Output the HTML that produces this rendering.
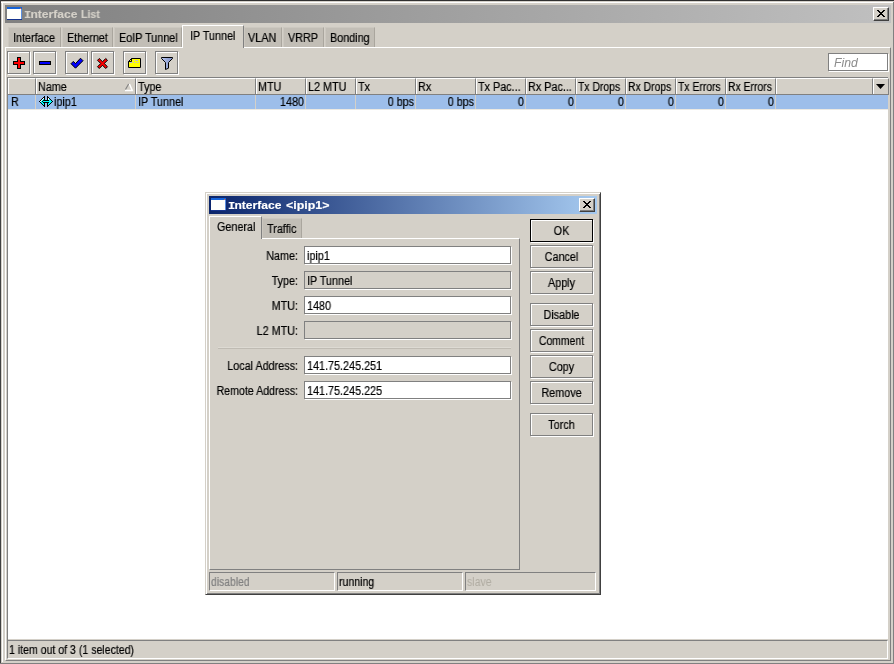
<!DOCTYPE html>
<html>
<head>
<meta charset="utf-8">
<title>Interface List</title>
<style>
html,body{margin:0;padding:0;}
body{width:894px;height:664px;position:relative;overflow:hidden;background:#d4d0c8;
  font-family:"Liberation Sans",sans-serif;font-size:11px;color:#000;}
div,span{position:absolute;box-sizing:border-box;}
.t{will-change:transform;-webkit-text-stroke:.2px currentColor;white-space:nowrap;font-size:12px;line-height:14px;height:14px;transform:scaleX(.9);transform-origin:0 0;}
.tb{will-change:transform;-webkit-text-stroke:.15px currentColor;white-space:nowrap;font-size:11px;line-height:13px;height:13px;font-weight:bold;transform:scaleX(1.095);transform-origin:0 0;}
.r{text-align:right;transform-origin:100% 0;}
.c{text-align:center;transform-origin:50% 0;}
/* etched button: 1px dark box, white inner top/left, white outer bottom/right */
.eb{border:1px solid #808080;box-shadow:inset 1px 1px 0 #fff,1px 1px 0 #fff;background:#d4d0c8;}
.fld{border:1px solid #808080;box-shadow:1px 1px 0 #fff;background:#fff;}
.fld.ro{background:#d4d0c8;}
.sunk{border:1px solid #808080;border-right-color:#fff;border-bottom-color:#fff;}
.itab{background:#c2beb6;border-left:1px solid #ccc8c0;border-top:1px solid #ccc8c0;border-right:1px solid #aaa69e;}
.hc{top:78px;height:16px;border-left:1px solid #fff;border-top:1px solid #fff;border-right:1px solid #808080;background:#d4d0c8;}
</style>
</head>
<body>

<!-- ===== main window frame ===== -->
<div style="left:0;top:0;width:894px;height:1px;background:#303030"></div>
<div style="left:0;top:0;width:1px;height:664px;background:#404040"></div>
<div style="left:1px;top:2px;width:892px;height:1px;background:#fff"></div>
<div style="left:2px;top:2px;width:1px;height:660px;background:#fff"></div>
<div style="left:893px;top:2px;width:1px;height:662px;background:#808080"></div>
<div style="left:0;top:663px;width:894px;height:1px;background:#808080"></div>

<!-- main title bar (inactive) -->
<div style="left:5px;top:5px;width:886px;height:18px;background:linear-gradient(to right,#808080 0%,#c0c0c0 100%)"></div>
<svg style="position:absolute;left:7px;top:7px" width="15" height="13" viewBox="0 0 15 13">
  <rect x="0" y="0" width="15" height="13" fill="#fffffb"/>
  <rect x="0" y="0" width="15" height="2" fill="#1663d8"/>
  <rect x="0" y="12" width="15" height="1" fill="#16348c"/>
  <rect x="14" y="2" width="1" height="10" fill="#5b8fe0"/>
  <rect x="13" y="1" width="1" height="1" fill="#e8602c"/>
</svg>
<span class="tb" style="left:25px;top:8px;color:#d4d0c8"><span style="position:static;font-family:'Liberation Mono',monospace;display:inline-block;width:5px;margin-left:-1px;margin-right:1px;text-align:left;transform:none">I</span>nterface</span><span class="tb" style="left:80.6px;top:8px;color:#d4d0c8;transform:scaleX(.96)">List</span>
<!-- close button -->
<div style="left:873px;top:7px;width:16px;height:14px;background:#d4d0c8;border:1px solid #fff;border-right-color:#404040;border-bottom-color:#404040;box-shadow:inset -1px -1px 0 #808080"></div>
<svg style="position:absolute;left:877px;top:10px" width="8" height="7" viewBox="0 0 8 7">
  <path d="M0 0h2v1h1v1h2v-1h1v-1h2v1h-1v1h-1v1h-1v1h1v1h1v1h1v1h-2v-1h-1v-1h-2v1h-1v1h-2v-1h1v-1h1v-1h1v-1h-1v-1h-1v-1h-1z" fill="#000"/>
</svg>

<!-- main tabs -->
<div class="itab" style="left:8px;top:27px;width:53px;height:20px"></div>
<div class="itab" style="left:62px;top:27px;width:51px;height:20px"></div>
<div class="itab" style="left:114px;top:27px;width:68px;height:20px"></div>
<div class="itab" style="left:244px;top:27px;width:38px;height:20px"></div>
<div class="itab" style="left:283px;top:27px;width:41px;height:20px"></div>
<div class="itab" style="left:325px;top:27px;width:50px;height:20px"></div>
<span class="t" style="left:13px;top:31px">Interface</span>
<span class="t" style="left:67px;top:31px">Ethernet</span>
<span class="t" style="left:119px;top:31px">EoIP Tunnel</span>
<span class="t" style="left:248px;top:31px">VLAN</span>
<span class="t" style="left:288px;top:31px">VRRP</span>
<span class="t" style="left:330px;top:31px">Bonding</span>

<!-- tab panel -->
<div style="left:5px;top:47px;width:886px;height:614px;border:1px solid #fff;border-right-color:#808080;border-bottom-color:#808080"></div>
<!-- active tab -->
<div style="left:182px;top:25px;width:62px;height:23px;background:#d4d0c8;border-left:1px solid #fff;border-top:1px solid #fff;border-right:1px solid #808080"></div>
<span class="t" style="left:190px;top:29px">IP Tunnel</span>

<!-- toolbar buttons -->
<div class="eb" style="left:7px;top:51px;width:23px;height:23px"></div>
<div class="eb" style="left:33px;top:51px;width:23px;height:23px"></div>
<div class="eb" style="left:65px;top:51px;width:23px;height:23px"></div>
<div class="eb" style="left:91px;top:51px;width:23px;height:23px"></div>
<div class="eb" style="left:123px;top:51px;width:23px;height:23px"></div>
<div class="eb" style="left:155px;top:51px;width:23px;height:23px"></div>
<svg style="position:absolute;left:0;top:51px" width="180" height="24" viewBox="0 51 180 24">
  <!-- plus -->
  <path d="M17 57h4v4h4v4h-4v4h-4v-4h-4v-4h4z" fill="#000" shape-rendering="crispEdges"/>
  <path d="M18 58h2v4h4v2h-4v4h-2v-4h-4v-2h4z" fill="#f00" shape-rendering="crispEdges"/>
  <!-- minus -->
  <rect x="39" y="61" width="12" height="4" fill="#000" shape-rendering="crispEdges"/>
  <rect x="40" y="62" width="10" height="2" fill="#00f" shape-rendering="crispEdges"/>
  <!-- check -->
  <path d="M80.5 58.2L83 60.7L75.5 68.2L71 63.7L73.3 61.4L75.5 63.6Z" fill="#00f" stroke="#000" stroke-width="1" stroke-linejoin="miter"/>
  <!-- x -->
  <path d="M99.27 58.50L102.50 61.73L105.73 58.50L107.50 60.27L104.27 63.50L107.50 66.73L105.73 68.50L102.50 65.27L99.27 68.50L97.50 66.73L100.73 63.50L97.50 60.27Z" fill="#f00" stroke="#000" stroke-width="1"/>
  <!-- comment note -->
  <path d="M131.5 58.5H140.5V67.5H128.5V61.5Z" fill="#ff0" stroke="#000" stroke-width="1"/>
  <path d="M131.5 58.5V61.5H128.5" fill="none" stroke="#000" stroke-width="1"/>
  <path d="M134 60.5h1M136 60.5h2M130 62.5h2.5M134 62.5h1.5M137 62.5h1.5" stroke="#b4b4e6" stroke-width="1"/>
  <!-- funnel -->
  <defs><linearGradient id="fg" x1="0" y1="0" x2="1" y2="0"><stop offset="0" stop-color="#b8c6ee"/><stop offset="1" stop-color="#7f90c8"/></linearGradient></defs>
  <path d="M161.5 57.5H172.5V58.5L168.5 62.5V68.2L165.5 69.5V62.5L161.5 58.5Z" fill="url(#fg)" stroke="#000" stroke-width="1"/>
</svg>

<!-- find box -->
<div style="left:828px;top:53px;width:60px;height:18px;background:#fff;border:1px solid #808080;box-shadow:1px 1px 0 #fff"></div>
<span class="t" style="left:834px;top:56px;font-style:italic;color:#8c8c8c;-webkit-text-stroke:0;transform:scaleX(1.02)">Find</span>

<!-- table -->
<div style="left:7px;top:77px;width:881px;height:562px;background:#fff;border-left:1px solid #808080;border-top:1px solid #808080"></div>
<div style="left:8px;top:78px;width:881px;height:17px;background:#d4d0c8;border-bottom:1px solid #808080"></div>
<div class="hc" style="left:8px;width:28px"></div>
<div class="hc" style="left:36px;width:100px"></div>
<div class="hc" style="left:136px;width:120px"></div>
<div class="hc" style="left:256px;width:50px"></div>
<div class="hc" style="left:306px;width:50px"></div>
<div class="hc" style="left:356px;width:60px"></div>
<div class="hc" style="left:416px;width:60px"></div>
<div class="hc" style="left:476px;width:50px"></div>
<div class="hc" style="left:526px;width:50px"></div>
<div class="hc" style="left:576px;width:50px"></div>
<div class="hc" style="left:626px;width:50px"></div>
<div class="hc" style="left:676px;width:50px"></div>
<div class="hc" style="left:726px;width:50px"></div>
<div class="hc" style="left:776px;width:97px"></div>
<div class="hc" style="left:873px;width:16px"></div>
<span class="t" style="left:38.3px;top:80px">Name</span>
<span class="t" style="left:138.3px;top:80px">Type</span>
<span class="t" style="left:258.3px;top:80px">MTU</span>
<span class="t" style="left:308.3px;top:80px">L2 MTU</span>
<span class="t" style="left:358.3px;top:80px">Tx</span>
<span class="t" style="left:418.3px;top:80px">Rx</span>
<span class="t" style="left:478.3px;top:80px">Tx Pac...</span>
<span class="t" style="left:528.3px;top:80px">Rx Pac...</span>
<span class="t" style="left:578.3px;top:80px;transform:scaleX(.865)">Tx Drops</span>
<span class="t" style="left:628.3px;top:80px;transform:scaleX(.865)">Rx Drops</span>
<span class="t" style="left:678.3px;top:80px;transform:scaleX(.865)">Tx Errors</span>
<span class="t" style="left:728.3px;top:80px;transform:scaleX(.865)">Rx Errors</span>
<svg style="position:absolute;left:876px;top:84px" width="9" height="5" viewBox="0 0 9 5"><path d="M0 0h9l-4.5 5z" fill="#000"/></svg>
<!-- sort arrow -->
<svg style="position:absolute;left:124px;top:83px" width="10" height="9" viewBox="124 83 10 9">
  <path d="M129.4 84L132.3 90.4H125" stroke="#fff" stroke-width="1.5" fill="none" stroke-linejoin="miter"/>
  <path d="M128.6 84L125.5 89.6" stroke="#808080" stroke-width="1.1" fill="none"/>
</svg>

<!-- selected row -->
<div style="left:8px;top:95px;width:880px;height:14px;background:#9dbeea"></div><div style="left:8px;top:109px;width:880px;height:1px;background:#ece9e2"></div>
<div style="left:35px;top:95px;width:1px;height:14px;background:#d4d0c8"></div><div style="left:135px;top:95px;width:1px;height:14px;background:#d4d0c8"></div><div style="left:255px;top:95px;width:1px;height:14px;background:#d4d0c8"></div><div style="left:305px;top:95px;width:1px;height:14px;background:#d4d0c8"></div><div style="left:355px;top:95px;width:1px;height:14px;background:#d4d0c8"></div><div style="left:415px;top:95px;width:1px;height:14px;background:#d4d0c8"></div><div style="left:475px;top:95px;width:1px;height:14px;background:#d4d0c8"></div><div style="left:525px;top:95px;width:1px;height:14px;background:#d4d0c8"></div><div style="left:575px;top:95px;width:1px;height:14px;background:#d4d0c8"></div><div style="left:625px;top:95px;width:1px;height:14px;background:#d4d0c8"></div><div style="left:675px;top:95px;width:1px;height:14px;background:#d4d0c8"></div><div style="left:725px;top:95px;width:1px;height:14px;background:#d4d0c8"></div><div style="left:775px;top:95px;width:1px;height:14px;background:#d4d0c8"></div>
<svg style="position:absolute;left:38px;top:95px" width="16" height="13" viewBox="38 95 16 13" shape-rendering="crispEdges"><path d="M43 99h1v1h-1zM49 99h1v1h-1zM42 100h1v1h-1zM49 100h1v1h-1zM50 100h1v1h-1zM41 101h1v1h-1zM43 101h1v1h-1zM44 101h1v1h-1zM45 101h1v1h-1zM46 101h1v1h-1zM47 101h1v1h-1zM48 101h1v1h-1zM49 101h1v1h-1zM50 101h1v1h-1zM51 101h1v1h-1zM41 102h1v1h-1zM42 102h1v1h-1zM49 102h1v1h-1zM50 102h1v1h-1zM42 103h1v1h-1zM43 103h1v1h-1zM48 103h1v1h-1zM49 103h1v1h-1zM43 104h1v1h-1zM48 104h1v1h-1z" fill="#0ff"/><path d="M43 98h1v1h-1zM48 98h1v1h-1zM42 99h1v1h-1zM48 99h1v1h-1zM41 100h1v1h-1zM40 101h1v1h-1z" fill="#fff"/><path d="M44 96h1v1h-1zM47 96h1v1h-1zM43 97h1v1h-1zM44 97h1v1h-1zM47 97h1v1h-1zM48 97h1v1h-1zM42 98h1v1h-1zM44 98h1v1h-1zM47 98h1v1h-1zM49 98h1v1h-1zM41 99h1v1h-1zM44 99h1v1h-1zM47 99h1v1h-1zM50 99h1v1h-1zM40 100h1v1h-1zM43 100h1v1h-1zM44 100h1v1h-1zM45 100h1v1h-1zM46 100h1v1h-1zM47 100h1v1h-1zM48 100h1v1h-1zM51 100h1v1h-1zM39 101h1v1h-1zM42 101h1v1h-1zM52 101h1v1h-1zM40 102h1v1h-1zM43 102h1v1h-1zM44 102h1v1h-1zM45 102h1v1h-1zM46 102h1v1h-1zM47 102h1v1h-1zM48 102h1v1h-1zM51 102h1v1h-1zM41 103h1v1h-1zM44 103h1v1h-1zM47 103h1v1h-1zM50 103h1v1h-1zM42 104h1v1h-1zM44 104h1v1h-1zM47 104h1v1h-1zM49 104h1v1h-1zM43 105h1v1h-1zM44 105h1v1h-1zM47 105h1v1h-1zM48 105h1v1h-1zM44 106h1v1h-1zM47 106h1v1h-1z" fill="#000"/></svg>
<span class="t" style="left:11px;top:95px">R</span>
<span class="t" style="left:54.3px;top:95px">ipip1</span>
<span class="t" style="left:138.3px;top:95px">IP Tunnel</span>
<span class="t r" style="left:256.8px;width:47px;top:95px">1480</span>
<span class="t r" style="left:356.8px;width:57px;top:95px">0 bps</span>
<span class="t r" style="left:416.8px;width:57px;top:95px">0 bps</span>
<span class="t r" style="left:476.8px;width:47px;top:95px">0</span>
<span class="t r" style="left:526.8px;width:47px;top:95px">0</span>
<span class="t r" style="left:576.8px;width:47px;top:95px">0</span>
<span class="t r" style="left:626.8px;width:47px;top:95px">0</span>
<span class="t r" style="left:676.8px;width:47px;top:95px">0</span>
<span class="t r" style="left:726.8px;width:47px;top:95px">0</span>

<!-- main status bar -->
<div style="left:7px;top:639px;width:1px;height:1px;background:#808080"></div>
<div style="left:7px;top:640px;width:881px;height:19px;background:#d4d0c8;border-top:1px solid #808080;border-left:1px solid #808080;border-right:1px solid #fff;border-bottom:1px solid #fff"></div>
<span class="t" style="left:9px;top:643px;transform:scaleX(.88)">1 item out of 3 (1 selected)</span>

<!-- ===== dialog ===== -->
<div style="left:205px;top:192px;width:396px;height:403px;background:#d4d0c8;border:1px solid #d4d0c8;border-right-color:#404040;border-bottom-color:#404040;box-shadow:inset 1px 1px 0 #fff,inset -1px -1px 0 #808080"></div>
<div style="left:209px;top:196px;width:388px;height:18px;background:linear-gradient(to right,#0a246a 0%,#a6caf0 100%)"></div>
<svg style="position:absolute;left:211px;top:198px" width="15" height="13" viewBox="0 0 15 13">
  <rect x="0" y="0" width="15" height="13" fill="#fffffb"/>
  <rect x="0" y="0" width="15" height="2" fill="#1663d8"/>
  <rect x="0" y="12" width="15" height="1" fill="#16348c"/>
  <rect x="14" y="2" width="1" height="10" fill="#5b8fe0"/>
  <rect x="13" y="1" width="1" height="1" fill="#e8602c"/>
</svg>
<span class="tb" style="left:229px;top:199px;color:#fff"><span style="position:static;font-family:'Liberation Mono',monospace;display:inline-block;width:5px;margin-left:-1px;margin-right:1px;text-align:left;transform:none">I</span>nterface</span><span class="tb" style="left:285.8px;top:199px;color:#fff;transform:scaleX(1.128)">&lt;ipip1&gt;</span>
<div style="left:579px;top:198px;width:16px;height:14px;background:#d4d0c8;border:1px solid #fff;border-right-color:#404040;border-bottom-color:#404040;box-shadow:inset -1px -1px 0 #808080"></div>
<svg style="position:absolute;left:583px;top:201px" width="8" height="7" viewBox="0 0 8 7">
  <path d="M0 0h2v1h1v1h2v-1h1v-1h2v1h-1v1h-1v1h-1v1h1v1h1v1h1v1h-2v-1h-1v-1h-2v1h-1v1h-2v-1h1v-1h1v-1h1v-1h-1v-1h-1v-1h-1z" fill="#000"/>
</svg>

<!-- dialog tabs -->
<div class="itab" style="left:262px;top:218px;width:40px;height:20px"></div>
<span class="t" style="left:267px;top:222px">Traffic</span>
<div style="left:209px;top:238px;width:311px;height:332px;border:1px solid #fff;border-right-color:#808080;border-bottom-color:#808080"></div>
<div style="left:209px;top:216px;width:53px;height:23px;background:#d4d0c8;border-left:1px solid #fff;border-top:1px solid #fff;border-right:1px solid #808080"></div>
<span class="t" style="left:217px;top:220px">General</span>

<!-- form -->
<span class="t r" style="left:158px;width:140px;top:249px">Name:</span>
<div class="fld" style="left:304px;top:246px;width:207px;height:18px"></div>
<span class="t" style="left:307.2px;top:249px">ipip1</span>

<span class="t r" style="left:158px;width:140px;top:274px">Type:</span>
<div class="fld ro" style="left:304px;top:271px;width:207px;height:18px"></div>
<span class="t" style="left:307.2px;top:274px">IP Tunnel</span>

<span class="t r" style="left:158px;width:140px;top:299px">MTU:</span>
<div class="fld" style="left:304px;top:296px;width:207px;height:18px"></div>
<span class="t" style="left:307.2px;top:299px">1480</span>

<span class="t r" style="left:158px;width:140px;top:324px">L2 MTU:</span>
<div class="fld ro" style="left:304px;top:321px;width:207px;height:18px"></div>

<div style="left:218px;top:347px;width:293px;height:1px;background:#dddad3"></div><div style="left:218px;top:348px;width:293px;height:1px;background:#bfbbb3"></div>

<span class="t r" style="left:158px;width:140px;top:359px">Local Address:</span>
<div class="fld" style="left:304px;top:356px;width:207px;height:18px"></div>
<span class="t" style="left:307.2px;top:359px">141.75.245.251</span>

<span class="t r" style="left:158px;width:140px;top:384px;transform:scaleX(.885)">Remote Address:</span>
<div class="fld" style="left:304px;top:381px;width:207px;height:18px"></div>
<span class="t" style="left:307.2px;top:384px">141.75.245.225</span>

<!-- dialog buttons -->
<div class="eb" style="left:530px;top:219px;width:63px;height:23px;border-color:#000"></div>
<span class="t c" style="left:530px;width:63px;top:224px">OK</span>
<div class="eb" style="left:530px;top:245px;width:63px;height:23px"></div>
<span class="t c" style="left:530px;width:63px;top:250px">Cancel</span>
<div class="eb" style="left:530px;top:271px;width:63px;height:23px"></div>
<span class="t c" style="left:530px;width:63px;top:276px">Apply</span>
<div class="eb" style="left:530px;top:303px;width:63px;height:23px"></div>
<span class="t c" style="left:530px;width:63px;top:308px">Disable</span>
<div class="eb" style="left:530px;top:329px;width:63px;height:23px"></div>
<span class="t c" style="left:530px;width:63px;top:334px;transform:scaleX(.865)">Comment</span>
<div class="eb" style="left:530px;top:355px;width:63px;height:23px"></div>
<span class="t c" style="left:530px;width:63px;top:360px">Copy</span>
<div class="eb" style="left:530px;top:381px;width:63px;height:23px"></div>
<span class="t c" style="left:530px;width:63px;top:386px">Remove</span>
<div class="eb" style="left:530px;top:413px;width:63px;height:23px"></div>
<span class="t c" style="left:530px;width:63px;top:418px">Torch</span>

<!-- dialog status bar -->
<div class="sunk" style="left:209px;top:572px;width:126px;height:19px"></div>
<span class="t" style="left:211.3px;top:575px;color:#808080;transform:scaleX(.865)">disabled</span>
<div class="sunk" style="left:337px;top:572px;width:126px;height:19px"></div>
<span class="t" style="left:339px;top:575px;transform:scaleX(.88)">running</span>
<div class="sunk" style="left:465px;top:572px;width:131px;height:19px"></div>
<span class="t" style="left:467px;top:575px;color:#b0aca2;-webkit-text-stroke:0;transform:scaleX(.88)">slave</span>

</body>
</html>
